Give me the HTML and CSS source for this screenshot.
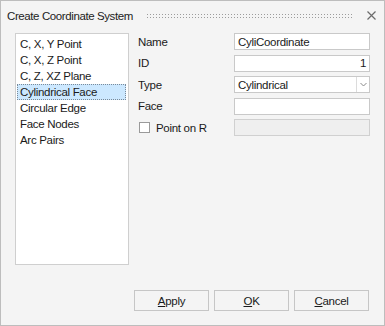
FILE: index.html
```html
<!DOCTYPE html>
<html lang="en">
<head>
    <meta charset="UTF-8">
    <title>Create Coordinate System</title>
    <link rel="stylesheet" href="styles.css">
</head>
<body>
    <div class="dialog">
        <div class="titlebar">
            <span class="title">Create Coordinate System</span>
            <span class="grip"></span>
            <svg class="close" width="9" height="9" viewBox="0 0 9 9">
                <path d="M0.5 0.5 L8.5 8.5 M8.5 0.5 L0.5 8.5" stroke="#6b6b6b" stroke-width="1.2" fill="none"/>
            </svg>
        </div>

        <div class="main">
            <ul class="method-list">
                <li>C, X, Y Point</li>
                <li>C, X, Z Point</li>
                <li>C, Z, XZ Plane</li>
                <li class="selected">Cylindrical Face</li>
                <li>Circular Edge</li>
                <li>Face Nodes</li>
                <li>Arc Pairs</li>
            </ul>

            <div class="form">
                <label class="field-label">Name</label>
                <div class="field">CyliCoordinate</div>

                <label class="field-label">ID</label>
                <div class="field num">1</div>

                <label class="field-label">Type</label>
                <div class="field select">
                    <span class="select-text">Cylindrical</span>
                    <span class="select-btn">
                        <svg width="7" height="5" viewBox="0 0 7 5">
                            <path d="M0.5 1 L3.5 4 L6.5 1" stroke="#8a8a8a" stroke-width="1" fill="none"/>
                        </svg>
                    </span>
                </div>

                <label class="field-label">Face</label>
                <div class="field"></div>

                <label class="field-label check-label"><span class="checkbox"></span>Point on R</label>
                <div class="field disabled"></div>
            </div>
        </div>

        <div class="buttons">
            <button class="btn"><u>A</u>pply</button>
            <button class="btn"><u>O</u>K</button>
            <button class="btn"><u>C</u>ancel</button>
        </div>
    </div>
</body>
</html>
```

FILE: styles.css
```css
body {
    margin: 0;
    font-family: 'Liberation Sans', Arial, sans-serif;
    font-size: 11.5px;
    letter-spacing: -0.3px;
    color: #1a1a1a;
}

.dialog {
    width: 385px;
    height: 326px;
    box-sizing: border-box;
    border: 1px solid #bdbdbd;
    background: #f4f4f4;
    display: flex;
    flex-direction: column;
}

.titlebar {
    height: 30px;
    display: flex;
    align-items: center;
    padding: 0 6px 1px 6px;
    box-sizing: border-box;
    flex-shrink: 0;
}

.title {
    color: #222;
    letter-spacing: -0.4px;
}

.grip {
    flex: 1;
    height: 5px;
    margin: 0 14px 0 13px;
    background-image: radial-gradient(circle, #9c9c9c 0.7px, transparent 0.8px);
    background-size: 3px 3px;
    background-position: 0 0;
}

.close {
    margin-right: 2px;
}

.main {
    display: flex;
    padding: 2px 0 0 14px;
}

.method-list {
    list-style: none;
    margin: 0;
    padding: 2px 2px 2px 1px;
    width: 114px;
    height: 232px;
    box-sizing: border-box;
    background: #fff;
    border: 1px solid #cfcfcf;
}

.method-list li {
    height: 16px;
    line-height: 14px;
    box-sizing: border-box;
    padding-left: 2px;
    border: 1px solid transparent;
    white-space: nowrap;
}

.method-list li.selected {
    background: #cce8ff;
    border: 1px dotted #7a8a99;
}

.form {
    display: grid;
    grid-template-columns: 97px 136px;
    grid-auto-rows: 17px;
    row-gap: 4.5px;
    margin-left: 8px;
    align-content: start;
}

.field-label {
    display: flex;
    align-items: center;
    padding-left: 1px;
}

.check-label {
    padding-left: 2px;
}

.checkbox {
    width: 9px;
    height: 9px;
    border: 1px solid #9a9a9a;
    background: #fff;
    margin-right: 6px;
}

.field {
    box-sizing: border-box;
    border: 1px solid #c9c9c9;
    background: #fff;
    display: flex;
    align-items: center;
    padding: 0 3px;
    white-space: nowrap;
}

.field.num {
    justify-content: flex-end;
}

.field.select {
    padding-right: 0;
}

.select-text {
    flex: 1;
}

.select-btn {
    width: 12px;
    height: 100%;
    border-left: 1px solid #dcdcdc;
    display: flex;
    align-items: center;
    justify-content: center;
}

.field.disabled {
    background: #efefef;
    border-color: #d0d0d0;
}

.buttons {
    display: flex;
    justify-content: flex-end;
    gap: 5px;
    padding: 25px 15px 0 0;
}

.btn {
    width: 75px;
    height: 21px;
    font-family: inherit;
    font-size: 11.5px;
    letter-spacing: -0.3px;
    color: #1a1a1a;
    background: #f4f4f4;
    border: 1px solid #c6c6c6;
    padding: 0;
}
```
